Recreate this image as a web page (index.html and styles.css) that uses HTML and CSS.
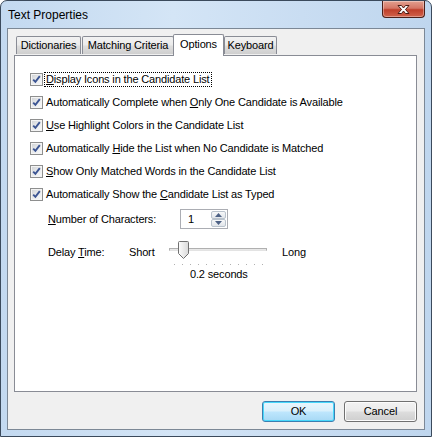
FILE: index.html
```html
<!DOCTYPE html>
<html>
<head>
<meta charset="utf-8">
<link rel="stylesheet" href="styles.css">
</head>
<body>
<div class="window">
  <div class="titlebar">
    <span class="title">Text Properties</span>
    <div class="close">
      <svg width="17" height="11" viewBox="0 0 17 11"><path d="M3 1.5 H6.5 L8.5 4 L10.5 1.5 H14 L10.5 5.5 L14 9.5 H10.5 L8.5 7 L6.5 9.5 H3 L6.5 5.5 Z" fill="#fff" stroke="#4a1a12" stroke-width="1" stroke-linejoin="round"/></svg>
    </div>
  </div>
  <div class="client">
    <div class="tabs">
      <div class="tab t-dict">Dictionaries</div>
      <div class="tab t-match">Matching Criteria</div>
      <div class="tab t-opt active">Options</div>
      <div class="tab t-key">Keyboard</div>
    </div>
    <div class="page">
      <div class="check"><span class="box"></span><span class="text focus"><u>D</u>isplay Icons in the Candidate List</span></div>
      <div class="check"><span class="box"></span><span class="text">Automatically Complete when <u>O</u>nly One Candidate is Available</span></div>
      <div class="check"><span class="box"></span><span class="text"><u>U</u>se Highlight Colors in the Candidate List</span></div>
      <div class="check"><span class="box"></span><span class="text">Automatically <u>H</u>ide the List when No Candidate is Matched</span></div>
      <div class="check"><span class="box"></span><span class="text"><u>S</u>how Only Matched Words in the Candidate List</span></div>
      <div class="check"><span class="box"></span><span class="text">Automatically Show the <u>C</u>andidate List as Typed</span></div>
      <div class="field num">
        <span class="lbl"><u>N</u>umber of Characters:</span>
        <div class="spin">
          <span class="spin-val">1</span>
          <div class="spin-btns">
            <span class="sb up"><svg width="7" height="4" viewBox="0 0 7 4"><path d="M0 4 L3.5 0 L7 4 Z" fill="#4d6185"/></svg></span>
            <span class="sb down"><svg width="7" height="4" viewBox="0 0 7 4"><path d="M0 0 L3.5 4 L7 0 Z" fill="#4d6185"/></svg></span>
          </div>
        </div>
      </div>
      <div class="field delay">
        <span class="lbl">Delay <u>T</u>ime:</span>
        <span class="short">Short</span>
        <div class="slider">
          <div class="track"></div>
          <svg class="thumb" width="11" height="18" viewBox="0 0 11 18">
            <defs><linearGradient id="tg" x1="0" y1="0" x2="1" y2="0"><stop offset="0" stop-color="#fdfdfd"/><stop offset="1" stop-color="#d9d9d9"/></linearGradient></defs>
            <path d="M0.5 1.5 Q0.5 0.5 1.5 0.5 H9.5 Q10.5 0.5 10.5 1.5 V12.5 L5.5 17.5 L0.5 12.5 Z" fill="url(#tg)" stroke="#707070"/>
          </svg>
          <div class="ticks"><i></i><i></i><i></i><i></i><i></i><i></i><i></i><i></i><i></i><i></i><i></i><i></i></div>
        </div>
        <span class="long">Long</span>
      </div>
      <div class="seconds">0.2 seconds</div>
    </div>
    <div class="buttons">
      <div class="btn default">OK</div>
      <div class="btn">Cancel</div>
    </div>
  </div>
</div>
</body>
</html>
```
FILE: styles.css
```css
html, body {
  margin: 0;
  padding: 0;
  background: #ffffff;
}
body {
  width: 432px;
  height: 437px;
  overflow: hidden;
  font-family: "Liberation Sans", Arial, sans-serif;
  font-size: 11px;
  letter-spacing: -0.15px;
  color: #000;
}
.window {
  box-sizing: border-box;
  width: 432px;
  height: 437px;
  border: 1px solid #3b4a5c;
  border-radius: 7px 7px 0 0;
  padding: 0 6px 6px 6px;
  background: linear-gradient(90deg, #c3d9f0 0%, #d4e5f6 40%, #c9ddf2 70%, #bfd6ee 100%);
  display: flex;
  flex-direction: column;
}
.titlebar {
  height: 27px;
  display: flex;
  align-items: flex-start;
  flex: none;
}
.title {
  margin-top: 7px;
  padding-left: 1px;
  font-size: 12px;
  letter-spacing: 0;
  line-height: 14px;
  color: #000;
}
.close {
  margin-left: auto;
  width: 43px;
  height: 17px;
  box-sizing: border-box;
  border: 1px solid #4b1f18;
  border-top: none;
  border-radius: 0 0 4px 4px;
  background: linear-gradient(180deg, #e3a08f 0%, #d57665 45%, #bf3f2a 55%, #d0624b 100%);
  display: flex;
  align-items: center;
  justify-content: center;
  box-shadow: inset 0 0 0 1px rgba(255,255,255,0.35);
}
.client {
  box-sizing: border-box;
  height: 402px;
  border: 1px solid #7c8896;
  background: #f0f0f0;
  padding: 5px 0 0 6px;
  display: flex;
  flex-direction: column;
}
.tabs {
  display: flex;
  align-items: flex-end;
  height: 21px;
  padding-left: 2px;
  position: relative;
  z-index: 2;
}
.tab {
  box-sizing: border-box;
  height: 18px;
  margin-bottom: 1px;
  border: 1px solid #898c95;
  border-bottom: none;
  border-radius: 2px 2px 0 0;
  background: linear-gradient(180deg, #f2f2f2 0%, #ebebeb 45%, #dddddd 55%, #cfcfcf 100%);
  line-height: 17px;
  text-align: center;
  white-space: nowrap;
}
.t-dict { width: 65px; margin-right: 1px; }
.t-match { width: 92px; }
.t-key { width: 53px; }
.tab.active {
  width: 51px;
  height: 22px;
  margin: 0 0 -1px -1px;
  background: #ffffff;
  line-height: 18px;
  position: relative;
  z-index: 3;
}
.page {
  box-sizing: border-box;
  width: 403px;
  height: 337px;
  border: 1px solid #898c95;
  background: #ffffff;
  padding: 17px 0 0 15px;
  position: relative;
  z-index: 1;
}
.check {
  display: flex;
  align-items: center;
  height: 13px;
  margin-bottom: 10px;
  white-space: nowrap;
}
.box {
  box-sizing: border-box;
  width: 13px;
  height: 13px;
  border: 1px solid #8e8f8f;
  background:
    url("data:image/svg+xml;utf8,<svg xmlns='http://www.w3.org/2000/svg' width='11' height='11' viewBox='0 0 11 11'><path d='M2.2 5.6 L4.4 7.9 L8.8 2.2' fill='none' stroke='%233c5593' stroke-width='1.9'/></svg>") center/11px 11px no-repeat,
    linear-gradient(135deg, #cfd1d4 0%, #eceef0 60%, #f8f9fa 100%);
  box-shadow: inset 0 0 0 1px #f4f4f4;
  flex: none;
}
.text {
  margin-left: 2px;
  padding: 0 1px;
  line-height: 13px;
}
.focus {
  outline: 1px dotted #000;
  outline-offset: 0px;
}
.field {
  display: flex;
  align-items: center;
  white-space: nowrap;
}
.num {
  margin-top: -2px;
  padding-left: 18px;
  height: 20px;
}
.num .lbl { width: 132px; }
.spin {
  box-sizing: border-box;
  width: 48px;
  height: 20px;
  border: 1px solid #abadb3;
  display: flex;
  align-items: center;
  justify-content: space-between;
  padding: 1px 1px 1px 7px;
}
.spin-btns {
  display: flex;
  flex-direction: column;
  height: 16px;
}
.sb {
  box-sizing: border-box;
  width: 15px;
  height: 8px;
  border: 1px solid #b9c2cc;
  border-radius: 2px;
  background: linear-gradient(180deg, #f7f8f9, #e1e5ea);
  display: flex;
  align-items: center;
  justify-content: center;
}
.delay {
  margin-top: 13px;
  padding-left: 18px;
  height: 20px;
}
.delay .lbl { width: 81px; }
.short { width: 40px; }
.slider {
  position: relative;
  width: 98px;
  height: 20px;
}
.track {
  position: absolute;
  left: 0;
  right: 0;
  top: 6px;
  height: 3px;
  box-sizing: border-box;
  border: 1px solid #b0b0b0;
  border-bottom-color: #e3e3e3;
  background: #e8e8e8;
}
.thumb {
  position: absolute;
  left: 9px;
  top: -1px;
}
.ticks {
  position: absolute;
  left: 5px;
  top: 22px;
  width: 89px;
  display: flex;
  justify-content: space-between;
}
.ticks i {
  width: 1px;
  height: 1px;
  background: #b0b0b0;
}
.long { margin-left: 15px; }
.seconds {
  margin-top: 6px;
  padding-left: 160px;
}
.buttons {
  display: flex;
  justify-content: flex-end;
  gap: 9px;
  margin-top: 9px;
  width: 403px;
}
.btn {
  box-sizing: border-box;
  width: 73px;
  height: 21px;
  border: 1px solid #707070;
  border-radius: 3px;
  background: linear-gradient(180deg, #f2f2f2 0%, #ebebeb 48%, #dddddd 52%, #cfcfcf 100%);
  box-shadow: inset 0 0 0 1px #fcfcfc;
  text-align: center;
  line-height: 19px;
}
.btn.default {
  border-color: #3c7fb1;
  background: linear-gradient(180deg, #eaf6fd 0%, #d9f0fc 48%, #bee6fd 52%, #a7d9f5 100%);
  box-shadow: inset 0 0 0 1px #48d8fb;
}
```
